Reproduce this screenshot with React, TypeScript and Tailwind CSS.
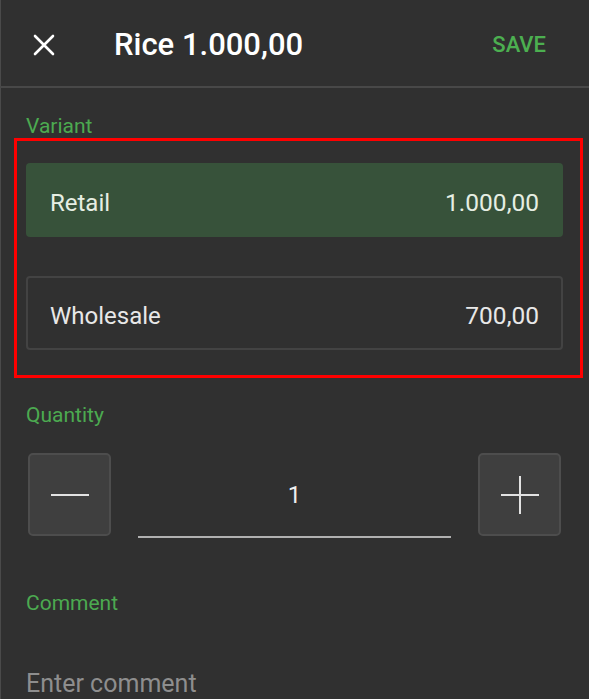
import React from 'react';

interface VariantRowProps {
    name: string;
    price: string;
    selected?: boolean;
}

const VariantRow = ({ name, price, selected }: VariantRowProps) => {
    return (
        <div
            className={
                selected
                    ? 'h-[74px] flex items-center justify-between pt-[5px] px-6 rounded-[4px] bg-[#37523a] text-[#e6eee3]'
                    : 'h-[74px] flex items-center justify-between pt-[5px] px-[22px] rounded-[4px] border-2 border-[#434343] text-[#e8e8e8]'
            }
        >
            <div className="text-[24px] leading-[28px]">{name}</div>
            <div className="text-[24.5px] leading-[28px]">{price}</div>
        </div>
    );
};

const Label = ({ children }: { children: React.ReactNode }) => (
    <div className="text-[21px] leading-[24px] text-[#4caa50]">{children}</div>
);

const StepButton = ({ plus }: { plus?: boolean }) => (
    <button className="w-[83px] h-[83px] shrink-0 flex items-center justify-center rounded-[5px] bg-[#3f3f3f] border-2 border-[#4d4d4d]">
        <svg width="40" height="40" viewBox="0 0 40 40">
            <line x1="1" y1="20" x2="39" y2="20" stroke="#e2e2e2" strokeWidth="2" />
            {plus && <line x1="20" y1="1" x2="20" y2="39" stroke="#e2e2e2" strokeWidth="2" />}
        </svg>
    </button>
);

export default function App() {
    return (
        <div className="w-[589px] h-[699px] overflow-hidden bg-[#303030] shadow-[inset_1px_0_0_#4a4a4a] font-['Roboto',sans-serif]">
            <div className="h-[88px] flex items-center pt-[4px] pl-[33px] pr-[43px] border-b-2 border-[#484848]">
                <svg width="22" height="22" viewBox="0 0 22 22" className="shrink-0">
                    <path d="M2 2 L20 20 M20 2 L2 20" stroke="#ffffff" strokeWidth="2.6" strokeLinecap="round" />
                </svg>
                <div className="ml-[59px] text-[31px] leading-[36px] font-medium text-white">Rice 1.000,00</div>
                <div className="ml-auto text-[22px] leading-[26px] font-medium text-[#4caf50]">SAVE</div>
            </div>

            <div className="px-[26px] pt-[26px]">
                <Label>Variant</Label>
                <div className="ml-[-12px] mr-[-20px] border-[3px] border-[#ff0000] pl-[9px] pr-[17px] pt-[22px] pb-[25px] flex flex-col gap-[39px]">
                    <VariantRow name="Retail" price="1.000,00" selected />
                    <VariantRow name="Wholesale" price="700,00" />
                </div>

                <div className="mt-[25px]">
                    <Label>Quantity</Label>
                </div>
                <div className="mt-[26px] px-[2px] flex items-start gap-[27px]">
                    <StepButton />
                    <div className="flex-1 h-[85px] flex items-center justify-center border-b-2 border-[#b0b0b0] text-[24px] text-[#eeeeee]">
                        1
                    </div>
                    <StepButton plus />
                </div>

                <div className="mt-[53px]">
                    <Label>Comment</Label>
                </div>
                <div className="mt-[54px] text-[25px] leading-[30px] text-[#8e8e8e]">Enter comment</div>
            </div>
        </div>
    );
}
